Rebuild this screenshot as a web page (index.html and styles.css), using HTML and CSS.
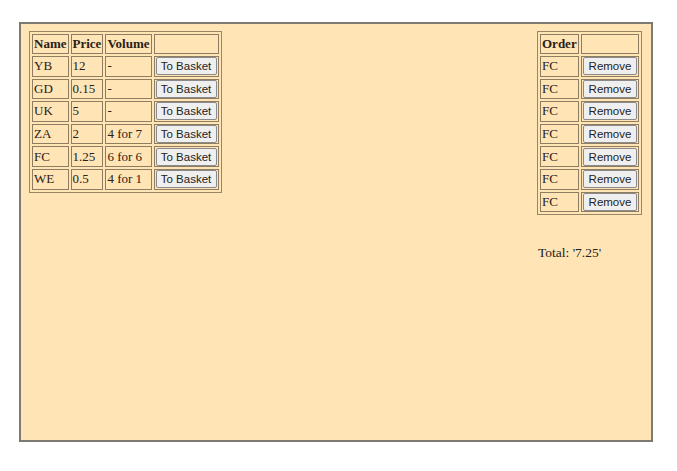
FILE: index.html
```html
<!DOCTYPE html>
<html>
<head>
<meta charset="utf-8">
<link rel="stylesheet" href="styles.css">
</head>
<body>
<div class="shop">
  <table class="grid">
    <tr class="head"><th>Name</th><th>Price</th><th>Volume</th><th></th></tr>
    <tr><td>YB</td><td>12</td><td>-</td><td class="act"><button class="btn">To Basket</button></td></tr>
    <tr><td>GD</td><td>0.15</td><td>-</td><td class="act"><button class="btn">To Basket</button></td></tr>
    <tr><td>UK</td><td>5</td><td>-</td><td class="act"><button class="btn">To Basket</button></td></tr>
    <tr><td>ZA</td><td>2</td><td>4 for 7</td><td class="act"><button class="btn">To Basket</button></td></tr>
    <tr><td>FC</td><td>1.25</td><td>6 for 6</td><td class="act"><button class="btn">To Basket</button></td></tr>
    <tr><td>WE</td><td>0.5</td><td>4 for 1</td><td class="act"><button class="btn">To Basket</button></td></tr>
  </table>
  <div class="order">
    <table class="grid">
      <tr class="head"><th>Order</th><th></th></tr>
      <tr><td class="wide">FC</td><td class="act"><button class="btn rm">Remove</button></td></tr>
      <tr><td class="wide">FC</td><td class="act"><button class="btn rm">Remove</button></td></tr>
      <tr><td class="wide">FC</td><td class="act"><button class="btn rm">Remove</button></td></tr>
      <tr><td class="wide">FC</td><td class="act"><button class="btn rm">Remove</button></td></tr>
      <tr><td class="wide">FC</td><td class="act"><button class="btn rm">Remove</button></td></tr>
      <tr><td class="wide">FC</td><td class="act"><button class="btn rm">Remove</button></td></tr>
      <tr><td class="wide">FC</td><td class="act"><button class="btn rm">Remove</button></td></tr>
    </table>
    <p class="total">Total: '7.25'</p>
  </div>
</div>
</body>
</html>
```
FILE: styles.css
```css
html, body {
  margin: 0;
  background: #ffffff;
}
body {
  padding: 22px 0 0 19px;
  font-family: "Liberation Serif", "Times New Roman", serif;
  font-size: 13px;
  color: #2a2118;
}
.shop {
  box-sizing: border-box;
  width: 634px;
  height: 420px;
  background: #ffe4b5;
  border: 2px solid #7d7a74;
  padding: 7px 8px 10px 8px;
  display: flex;
  justify-content: space-between;
  align-items: flex-start;
}
.grid {
  border: 1px solid #9a8566;
  border-spacing: 2px;
  border-collapse: separate;
}
.grid th, .grid td {
  border: 1px solid #8f7d62;
  padding: 1px 1px;
  height: 16.6px;
  text-align: left;
  vertical-align: middle;
  line-height: 16px;
  white-space: nowrap;
}
.grid th {
  font-weight: bold;
  height: 14px;
}
.grid td.act {
  padding: 0 1px;
}
.grid td.wide {
  width: 35px;
}
.btn {
  display: block;
  box-sizing: border-box;
  width: 61px;
  height: 18px;
  margin: 0;
  padding: 0 3px;
  font-family: "Liberation Sans", Arial, sans-serif;
  font-size: 11.5px;
  color: #222;
  background: #efefef;
  border: 1px solid #8a8a8a;
  border-radius: 2px;
  line-height: 16px;
  white-space: nowrap;
  text-align: center;
}
.btn.rm {
  width: 54px;
}
.order {
  display: flex;
  flex-direction: column;
  padding-right: 1px;
}
.total {
  margin: 30px 0 0 1px;
  font-size: 13.5px;
  line-height: 16px;
}
```
